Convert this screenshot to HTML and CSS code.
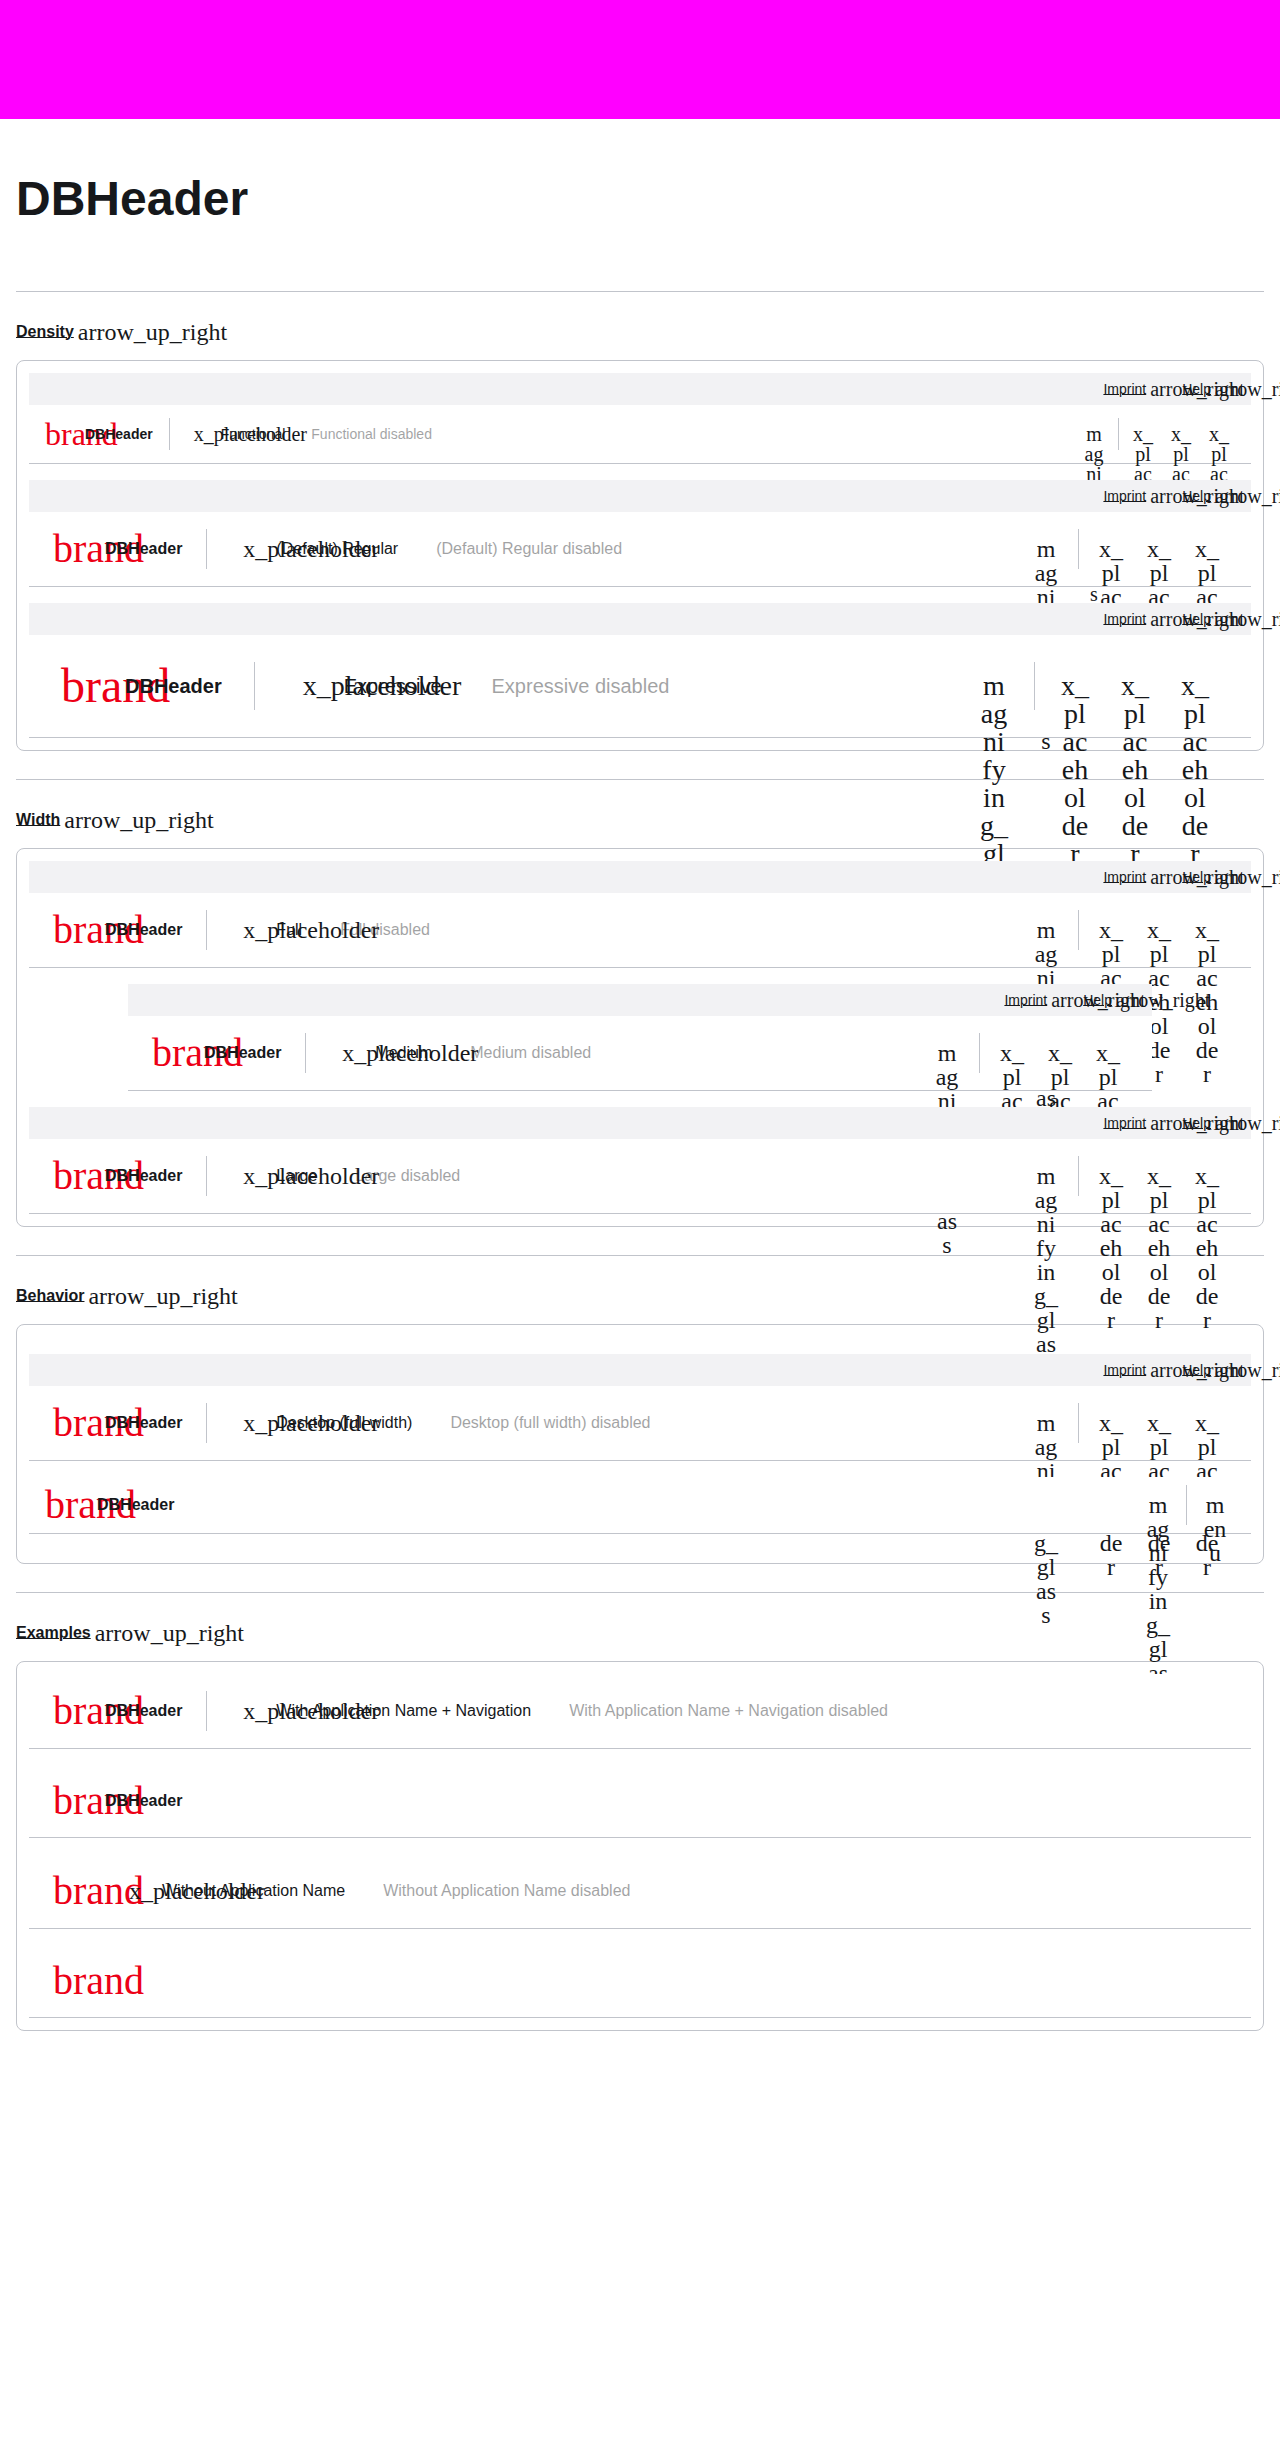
FILE: index.html
```html
<!DOCTYPE html>
<html lang="en">
<head>
<meta charset="utf-8">
<title>DBHeader</title>
<link rel="stylesheet" href="styles.css">
</head>
<body>
<div class="stage"></div>
<main class="page">
  <h1 class="title">DBHeader</h1>

  <section class="group">
    <div class="group-head"><a class="group-link">Density</a><span class="icon">arrow_up_right</span></div>
    <div class="card">
      <header class="header functional">
        <div class="meta"><a class="link">Imprint</a><i class="link-icon">arrow_right</i><a class="link">Help</a><i class="link-icon">arrow_right</i></div>
        <div class="bar">
          <div class="brand"><span class="logo">brand</span><b>DBHeader</b></div>
          <nav class="nav lined"><a class="item"><span class="icon">x_placeholder</span>Functional</a><a class="item off">Functional disabled</a></nav>
          <div class="actions"><span class="button"><i>magnifying_glass</i></span></div>
          <div class="actions lined"><span class="button"><i>x_placeholder</i></span><span class="button"><i>x_placeholder</i></span><span class="button"><i>x_placeholder</i></span></div>
        </div>
      </header>
      <header class="header">
        <div class="meta"><a class="link">Imprint</a><i class="link-icon">arrow_right</i><a class="link">Help</a><i class="link-icon">arrow_right</i></div>
        <div class="bar">
          <div class="brand"><span class="logo">brand</span><b>DBHeader</b></div>
          <nav class="nav lined"><a class="item"><span class="icon">x_placeholder</span>(Default) Regular</a><a class="item off">(Default) Regular disabled</a></nav>
          <div class="actions"><span class="button"><i>magnifying_glass</i></span></div>
          <div class="actions lined"><span class="button"><i>x_placeholder</i></span><span class="button"><i>x_placeholder</i></span><span class="button"><i>x_placeholder</i></span></div>
        </div>
      </header>
      <header class="header expressive">
        <div class="meta"><a class="link">Imprint</a><i class="link-icon">arrow_right</i><a class="link">Help</a><i class="link-icon">arrow_right</i></div>
        <div class="bar">
          <div class="brand"><span class="logo">brand</span><b>DBHeader</b></div>
          <nav class="nav lined"><a class="item"><span class="icon">x_placeholder</span>Expressive</a><a class="item off">Expressive disabled</a></nav>
          <div class="actions"><span class="button"><i>magnifying_glass</i></span></div>
          <div class="actions lined"><span class="button"><i>x_placeholder</i></span><span class="button"><i>x_placeholder</i></span><span class="button"><i>x_placeholder</i></span></div>
        </div>
      </header>
    </div>
  </section>

  <section class="group">
    <div class="group-head"><a class="group-link">Width</a><span class="icon">arrow_up_right</span></div>
    <div class="card">
      <header class="header">
        <div class="meta"><a class="link">Imprint</a><i class="link-icon">arrow_right</i><a class="link">Help</a><i class="link-icon">arrow_right</i></div>
        <div class="bar">
          <div class="brand"><span class="logo">brand</span><b>DBHeader</b></div>
          <nav class="nav lined"><a class="item"><span class="icon">x_placeholder</span>Full</a><a class="item off">Full disabled</a></nav>
          <div class="actions"><span class="button"><i>magnifying_glass</i></span></div>
          <div class="actions lined"><span class="button"><i>x_placeholder</i></span><span class="button"><i>x_placeholder</i></span><span class="button"><i>x_placeholder</i></span></div>
        </div>
      </header>
      <header class="header medium">
        <div class="meta"><a class="link">Imprint</a><i class="link-icon">arrow_right</i><a class="link">Help</a><i class="link-icon">arrow_right</i></div>
        <div class="bar">
          <div class="brand"><span class="logo">brand</span><b>DBHeader</b></div>
          <nav class="nav lined"><a class="item"><span class="icon">x_placeholder</span>Medium</a><a class="item off">Medium disabled</a></nav>
          <div class="actions"><span class="button"><i>magnifying_glass</i></span></div>
          <div class="actions lined"><span class="button"><i>x_placeholder</i></span><span class="button"><i>x_placeholder</i></span><span class="button"><i>x_placeholder</i></span></div>
        </div>
      </header>
      <header class="header">
        <div class="meta"><a class="link">Imprint</a><i class="link-icon">arrow_right</i><a class="link">Help</a><i class="link-icon">arrow_right</i></div>
        <div class="bar">
          <div class="brand"><span class="logo">brand</span><b>DBHeader</b></div>
          <nav class="nav lined"><a class="item"><span class="icon">x_placeholder</span>Large</a><a class="item off">Large disabled</a></nav>
          <div class="actions"><span class="button"><i>magnifying_glass</i></span></div>
          <div class="actions lined"><span class="button"><i>x_placeholder</i></span><span class="button"><i>x_placeholder</i></span><span class="button"><i>x_placeholder</i></span></div>
        </div>
      </header>
    </div>
  </section>

  <section class="group">
    <div class="group-head"><a class="group-link">Behavior</a><span class="icon">arrow_up_right</span></div>
    <div class="card roomy">
      <header class="header">
        <div class="meta"><a class="link">Imprint</a><i class="link-icon">arrow_right</i><a class="link">Help</a><i class="link-icon">arrow_right</i></div>
        <div class="bar">
          <div class="brand"><span class="logo">brand</span><b>DBHeader</b></div>
          <nav class="nav lined"><a class="item"><span class="icon">x_placeholder</span>Desktop (full width)</a><a class="item off">Desktop (full width) disabled</a></nav>
          <div class="actions"><span class="button"><i>magnifying_glass</i></span></div>
          <div class="actions lined"><span class="button"><i>x_placeholder</i></span><span class="button"><i>x_placeholder</i></span><span class="button"><i>x_placeholder</i></span></div>
        </div>
      </header>
      <header class="header mobile">
        <div class="bar">
          <div class="brand"><span class="logo">brand</span><b>DBHeader</b></div>
          <div class="nav"></div>
          <div class="actions"><span class="button"><i>magnifying_glass</i></span></div>
          <div class="actions lined"><span class="button"><i>menu</i></span></div>
        </div>
      </header>
    </div>
  </section>

  <section class="group">
    <div class="group-head"><a class="group-link">Examples</a><span class="icon">arrow_up_right</span></div>
    <div class="card">
      <header class="header">
        <div class="bar">
          <div class="brand"><span class="logo">brand</span><b>DBHeader</b></div>
          <nav class="nav lined"><a class="item"><span class="icon">x_placeholder</span>With Application Name + Navigation</a><a class="item off">With Application Name + Navigation disabled</a></nav>
        </div>
      </header>
      <header class="header short">
        <div class="bar"><div class="brand"><span class="logo">brand</span><b>DBHeader</b></div></div>
      </header>
      <header class="header">
        <div class="bar">
          <div class="brand"><span class="logo">brand</span></div>
          <nav class="nav"><a class="item"><span class="icon">x_placeholder</span>Without Application Name</a><a class="item off">Without Application Name disabled</a></nav>
        </div>
      </header>
      <header class="header short">
        <div class="bar"><div class="brand"><span class="logo">brand</span></div></div>
      </header>
    </div>
  </section>
</main>
</body>
</html>
```
FILE: styles.css
```css
* { box-sizing: border-box; }

html { overflow-x: hidden; }

body {
  margin: 0;
  min-height: 2450px;
  overflow-x: hidden;
  background: #fff;
  color: #16181b;
  font: 16px/24px "Liberation Sans", Arial, sans-serif;
}

.stage { height: 119px; background: #f0f; }

.page { padding: 0 16px; }

.title {
  margin: 0;
  padding: 52px 0 64px;
  font-size: 48px;
  line-height: 56px;
}

.group {
  border-top: 1px solid #c1c4cb;
  padding-bottom: 28px;
}

.group-head {
  display: flex;
  align-items: center;
  gap: 4px;
  height: 68px;
  padding-top: 12px;
}

.group-link {
  font-weight: 700;
  text-decoration: underline;
  text-decoration-thickness: 1px;
  text-underline-offset: 0;
}

.icon,
.link-icon,
.logo,
.button i {
  font-family: "Liberation Serif", "Times New Roman", serif;
  font-style: normal;
  font-weight: 400;
  line-height: 1;
}

.group-head .icon { font-size: 24px; }

.card {
  display: flex;
  flex-direction: column;
  gap: 16px;
  padding: 12px;
  border: 1px solid #c1c4cb;
  border-radius: 8px;
}

.card.roomy { padding: 29px 12px; }

/* Density tokens: regular is the default */
.header {
  --size: 40px;
  --inset: 24px;
  --pad-y: 17px;
  --gap: 12px;
  --gap-s: 8px;
  --icon: 24px;
  --text: 16px;
  position: relative;
  border-bottom: 1px solid #c1c4cb;
  background: #fff;
}

.functional {
  --size: 32px;
  --inset: 16px;
  --pad-y: 13px;
  --gap: 8px;
  --gap-s: 6px;
  --icon: 20px;
  --text: 14px;
}

.expressive {
  --size: 48px;
  --inset: 32px;
  --pad-y: 27px;
  --gap: 16px;
  --gap-s: 12px;
  --icon: 28px;
  --text: 20px;
}

.medium { width: 1024px; align-self: center; }
.short { --pad-y: 16px; }

.meta {
  display: flex;
  align-items: center;
  justify-content: flex-end;
  height: 32px;
  padding: 0 16px;
  background: #f2f2f4;
}

.link {
  font-size: 14px;
  line-height: 20px;
  text-decoration: underline;
  text-decoration-thickness: 1px;
  text-underline-offset: 0;
}

.link-icon {
  width: 20px;
  margin-left: 4px;
  font-size: 20px;
  white-space: nowrap;
}

.link-icon + .link { margin-left: 12px; }

.bar {
  display: flex;
  align-items: center;
  padding: var(--pad-y) var(--inset);
  font-size: var(--text);
}

.brand {
  display: flex;
  align-items: center;
  gap: var(--gap);
  height: var(--size);
}

.logo {
  width: var(--size);
  color: #ec0016;
  font-size: var(--size);
}

.brand b { position: relative; }

.nav {
  display: flex;
  flex: 1;
  gap: var(--gap);
  align-items: center;
  height: var(--size);
  margin-left: var(--inset);
}

.nav.lined {
  padding-left: var(--inset);
  border-left: 1px solid #c1c4cb;
}

.item {
  display: flex;
  align-items: center;
  gap: calc(var(--gap-s) + 1px);
  padding: 0 calc(var(--gap) + 1px) 0 var(--gap);
  white-space: nowrap;
}

.item .icon { width: var(--icon); font-size: var(--icon); }
.off { padding-left: calc(var(--gap) + 1px); opacity: .4; }

.actions { display: flex; gap: var(--gap-s); }

.actions.lined {
  margin-left: var(--gap);
  padding-left: var(--gap);
  border-left: 1px solid #c1c4cb;
}

.button {
  display: flex;
  justify-content: center;
  align-items: center;
  width: var(--size);
  height: var(--size);
}

.button i {
  width: var(--icon);
  height: var(--icon);
  font-size: var(--icon);
  text-align: center;
  word-break: break-all;
}

.mobile { --inset: 16px; --pad-y: 8px; }
.mobile .actions.lined { margin-left: 8px; padding-left: 8px; }
```
